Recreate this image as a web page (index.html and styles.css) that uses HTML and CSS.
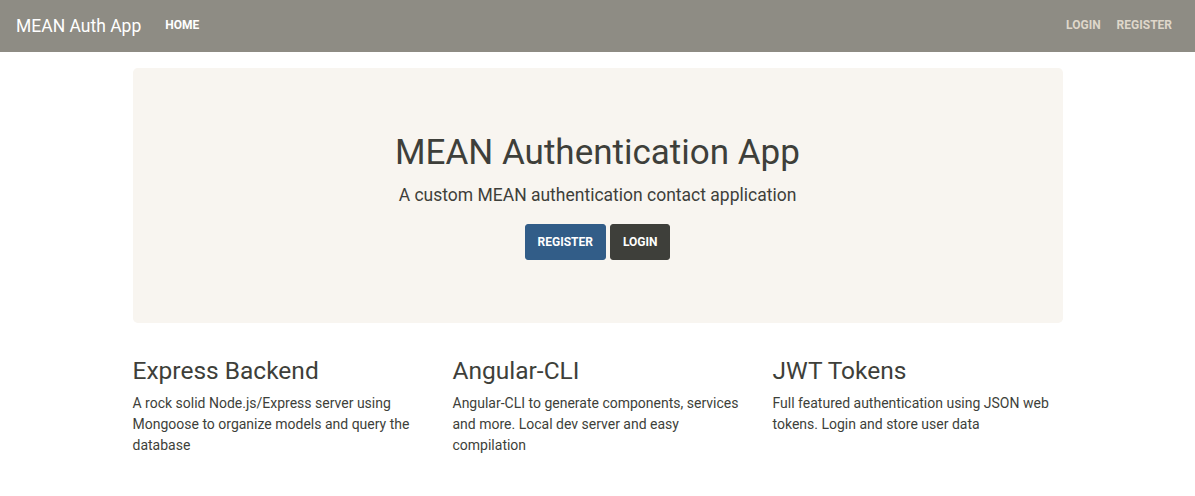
FILE: index.html
```html
<!DOCTYPE html>
<html lang="en">
<head>
<meta charset="utf-8">
<title>MEAN Auth App</title>
<link rel="stylesheet" href="styles.css">
</head>
<body>
<nav class="navbar">
  <div class="nav-left">
    <a class="brand" href="#">MEAN Auth App</a>
    <a class="nav-link active" href="#">Home</a>
  </div>
  <div class="nav-right">
    <a class="nav-link" href="#">Login</a>
    <a class="nav-link" href="#">Register</a>
  </div>
</nav>
<main class="container">
  <section class="jumbotron">
    <h1 class="title">MEAN Authentication App</h1>
    <p class="lead">A custom MEAN authentication contact application</p>
    <div class="actions">
      <a class="btn btn-primary" href="#">Register</a>
      <a class="btn btn-dark" href="#">Login</a>
    </div>
  </section>
  <div class="row">
    <div class="col">
      <h3>Express Backend</h3>
      <p>A rock solid Node.js/Express server using Mongoose to organize models and query the database</p>
    </div>
    <div class="col">
      <h3>Angular-CLI</h3>
      <p>Angular-CLI to generate components, services and more. Local dev server and easy compilation</p>
    </div>
    <div class="col">
      <h3>JWT Tokens</h3>
      <p>Full featured authentication using JSON web tokens. Login and store user data</p>
    </div>
  </div>
</main>
</body>
</html>
```
FILE: styles.css
```css
* { box-sizing: border-box; }
html, body { margin: 0; padding: 0; }
body {
  font-family: Roboto, "Liberation Sans", sans-serif;
  font-size: 14px;
  line-height: 1.5;
  color: #3e3f3a;
  background: #fff;
}
a { text-decoration: none; }

.navbar {
  height: 52px;
  background: #8e8c84;
  display: flex;
  align-items: center;
  justify-content: space-between;
  padding: 0 15px 0 16px;
}
.nav-left, .nav-right { display: flex; align-items: center; }
.brand {
  color: #fff;
  font-size: 17.5px;
  line-height: 27px;
  margin-right: 16px;
}
.nav-link {
  font-size: 12px;
  font-weight: 700;
  text-transform: uppercase;
  color: #dfd7ca;
  padding: 8px 8px;
  line-height: 19px;
  margin-top: -2px;
}
.nav-link.active { color: #fff; }

.container {
  width: 960px;
  margin: 0 auto;
  padding: 0 15px;
}
.jumbotron {
  margin-top: 16px;
  background: #f8f5f0;
  border-radius: 4.8px;
  padding: 64px 32px;
  text-align: center;
  height: 255px;
}
.title {
  margin: 0 0 8px;
  font-size: 35px;
  font-weight: 400;
  line-height: 1.2;
}
.lead {
  margin: 0 0 16px;
  font-size: 17.5px;
  font-weight: 400;
  line-height: 1.5;
}
.actions { display: flex; justify-content: center; gap: 4px; }
.btn {
  display: inline-block;
  font-size: 12px;
  font-weight: 700;
  text-transform: uppercase;
  color: #fff;
  line-height: 18px;
  padding: 8px 12px;
  border-radius: 3px;
  border: 1px solid transparent;
}
.btn-primary { background: #325d88; border-color: #325d88; }
.btn-dark { background: #3e3f3a; border-color: #3e3f3a; }

.row {
  display: flex;
  margin: 33px -15px 0;
}
.col { flex: 1 1 0; padding: 0 15px; }
.col h3 {
  margin: 0 0 8px;
  font-size: 24.5px;
  font-weight: 400;
  line-height: 1.2;
}
.col p { margin: 0; }
```
